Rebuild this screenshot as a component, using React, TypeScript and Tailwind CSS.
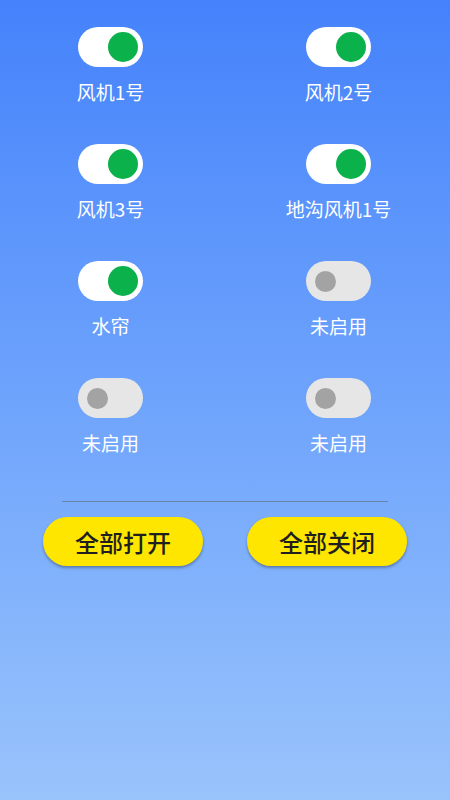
import { useState } from "react";

type Fan = { name: string; on: boolean; enabled: boolean };

const initialFans: Fan[] = [
  { name: "风机1号", on: true, enabled: true },
  { name: "风机2号", on: true, enabled: true },
  { name: "风机3号", on: true, enabled: true },
  { name: "地沟风机1号", on: true, enabled: true },
  { name: "水帘", on: true, enabled: true },
  { name: "未启用", on: false, enabled: false },
  { name: "未启用", on: false, enabled: false },
  { name: "未启用", on: false, enabled: false },
];

function Toggle({ on, onClick }: { on: boolean; onClick: () => void }) {
  return (
    <button
      onClick={onClick}
      className={`flex h-[40px] w-[65px] items-center rounded-full px-[5px] ${
        on ? "justify-end bg-white" : "justify-start bg-[#e6e6e6]"
      }`}
    >
      {on ? (
        <span className="h-[30px] w-[30px] rounded-full bg-[#0bb14a]" />
      ) : (
        <span className="ml-[4px] h-[21px] w-[21px] rounded-full bg-[#a3a3a3]" />
      )}
    </button>
  );
}

export default function App() {
  const [fans, setFans] = useState(initialFans);

  const toggle = (i: number) => {
    setFans((prev) =>
      prev.map((f, j) => (j === i && f.enabled ? { ...f, on: !f.on } : f))
    );
  };

  const setAll = (on: boolean) => {
    setFans((prev) => prev.map((f) => (f.enabled ? { ...f, on } : f)));
  };

  return (
    <div
      className="min-h-[800px] w-[450px] overflow-hidden bg-gradient-to-b from-[#4582fb] to-[#99c3fb] pt-[27px]"
      style={{ fontFamily: '"Noto Sans CJK SC", "Noto Sans", sans-serif' }}
    >
      <div className="grid grid-cols-[221px_235px] gap-y-[44px]">
        {fans.map((f, i) => (
          <div key={i} className="flex flex-col items-center">
            <Toggle on={f.on} onClick={() => toggle(i)} />
            <span className="mt-[17px] text-[19px] leading-[16px] text-white">
              {f.name}
            </span>
          </div>
        ))}
      </div>

      <div className="mx-[62px] mt-[50px] h-px bg-[#6b84aa]" />

      <div className="mt-[15px] flex justify-between px-[43px]">
        <button
          onClick={() => setAll(true)}
          className="h-[49px] w-[160px] rounded-full bg-[#ffe600] text-[24px] font-medium text-[#1f1f1f] shadow-[0_2px_3px_rgba(0,0,0,0.3)]"
        >
          全部打开
        </button>
        <button
          onClick={() => setAll(false)}
          className="h-[49px] w-[160px] rounded-full bg-[#ffe600] text-[24px] font-medium text-[#1f1f1f] shadow-[0_2px_3px_rgba(0,0,0,0.3)]"
        >
          全部关闭
        </button>
      </div>
    </div>
  );
}
